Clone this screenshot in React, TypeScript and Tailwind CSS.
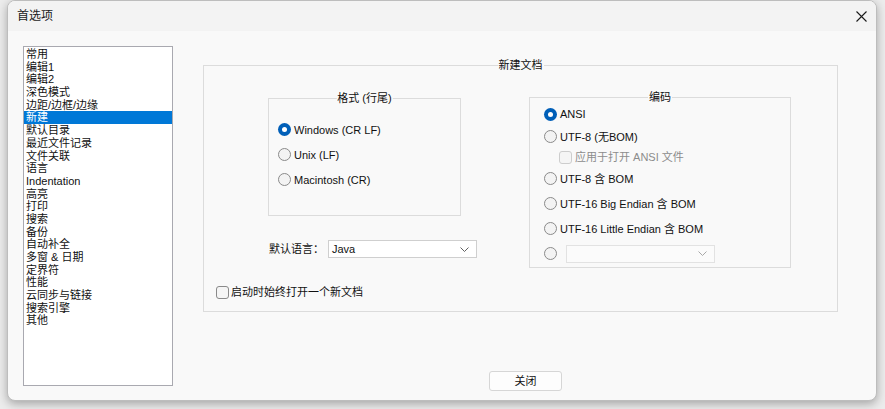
import React from "react";

const font = { fontFamily: '"Liberation Sans", "Noto Sans CJK SC", sans-serif' };

const items = [
  "常用", "编辑1", "编辑2", "深色模式", "边距/边框/边缘", "新建", "默认目录", "最近文件记录",
  "文件关联", "语言", "Indentation", "高亮", "打印", "搜索", "备份", "自动补全",
  "多窗 & 日期", "定界符", "性能", "云同步与链接", "搜索引擎", "其他",
];

function Radio({ checked }: { checked?: boolean }) {
  if (checked) {
    return (
      <span className="flex h-[13px] w-[13px] shrink-0 items-center justify-center rounded-full bg-[#005fb8]">
        <span className="h-[5px] w-[5px] rounded-full bg-white" />
      </span>
    );
  }
  return <span className="h-[13px] w-[13px] shrink-0 rounded-full border border-[#8a8a8a] bg-[#f3f3f3]" />;
}

function Chevron({ color = "#606060" }: { color?: string }) {
  return (
    <svg width="9" height="5" viewBox="0 0 9 5" fill="none">
      <path d="M0.5 0.5 L4.5 4.5 L8.5 0.5" stroke={color} strokeWidth="1" />
    </svg>
  );
}

function RadioRow({ checked, label, h }: { checked?: boolean; label: string; h: string }) {
  return (
    <div className={`flex items-center ${h}`}>
      <Radio checked={checked} />
      <span className="ml-[3px] text-[11px] leading-[14px] text-[#111]">{label}</span>
    </div>
  );
}

export default function App() {
  return (
    <div className="h-[409px] w-[885px] overflow-hidden bg-[#ececec] pl-[7px]" style={font}>
      <div className="flex h-[401px] w-[870px] flex-col overflow-hidden rounded-b-[8px] rounded-t-[8px] border border-[#bdbdbd] bg-[#f9f9f9] shadow-[0_3px_10px_rgba(0,0,0,0.3)]">
        {/* title bar */}
        <div className="flex h-[30px] shrink-0 items-center justify-between bg-[#f3f3f3] pl-[9px] pr-[9px]">
          <span className="text-[12px] leading-[14px] text-[#1b1b1b]">首选项</span>
          <svg width="11" height="11" viewBox="0 0 11 11">
            <path d="M0.5 0.5 L10.5 10.5 M10.5 0.5 L0.5 10.5" stroke="#1a1a1a" strokeWidth="1.1" />
          </svg>
        </div>
        {/* body */}
        <div className="flex flex-1 items-start pl-[15px] pt-[15px]">
          {/* list */}
          <div className="h-[340px] w-[150px] shrink-0 border border-[#a9a9b0] bg-white pt-[1px]">
            {items.map((it) => (
              <div
                key={it}
                className={`h-[12.7px] pl-[2px] text-[11px] leading-[12.7px] ${
                  it === "新建" ? "bg-[#0078d7] text-white" : "text-[#111]"
                }`}
              >
                {it}
              </div>
            ))}
          </div>
          {/* right side */}
          <div className="ml-[30px] flex flex-col pt-[19px]">
            <div className="relative h-[247px] w-[635px] border border-[#dcdcdc]">
              <span className="absolute left-1/2 top-[-8px] -translate-x-1/2 bg-[#f9f9f9] px-[1px] text-[11px] leading-[14px] text-[#111]">
                新建文档
              </span>
              <div className="flex items-start pl-[64px] pt-[31px]">
                {/* left column */}
                <div className="flex w-[193px] flex-col">
                  <div className="relative mt-[1px] h-[118px] w-[193px] border border-[#dcdcdc] pl-[9px] pt-[18px]">
                    <span className="absolute left-1/2 top-[-8px] -translate-x-1/2 bg-[#f9f9f9] px-[1px] text-[11px] leading-[14px] text-[#111]">
                      格式 (行尾)
                    </span>
                    <RadioRow checked label="Windows (CR LF)" h="h-[25px]" />
                    <RadioRow label="Unix (LF)" h="h-[25px]" />
                    <RadioRow label="Macintosh (CR)" h="h-[25px]" />
                  </div>
                  <div className="ml-[1px] mt-[24px] flex h-[18px] items-center">
                    <span className="w-[59px] shrink-0 text-[11px] leading-[14px] text-[#111]">默认语言：</span>
                    <div className="flex h-[18px] w-[149px] shrink-0 items-center justify-between border border-[#cfcfcf] bg-white pl-[3px] pr-[7px]">
                      <span className="text-[11px] leading-[14px] text-[#111]">Java</span>
                      <Chevron />
                    </div>
                  </div>
                </div>
                {/* encoding */}
                <div className="relative ml-[68px] h-[171px] w-[262px] border border-[#dcdcdc] pl-[14px] pt-[5px]">
                  <span className="absolute left-1/2 top-[-8px] -translate-x-1/2 bg-[#f9f9f9] px-[1px] text-[11px] leading-[14px] text-[#111]">
                    编码
                  </span>
                  <RadioRow checked label="ANSI" h="h-[22px]" />
                  <RadioRow label="UTF-8 (无BOM)" h="h-[23px]" />
                  <div className="flex h-[18px] items-center pl-[15px]">
                    <span className="h-[13px] w-[13px] shrink-0 rounded-[3px] border border-[#cdcdcd] bg-[#f5f5f5]" />
                    <span className="ml-[3px] text-[11px] leading-[14px] text-[#8c8c8c]">应用于打开 ANSI 文件</span>
                  </div>
                  <RadioRow label="UTF-8 含 BOM" h="h-[25px]" />
                  <RadioRow label="UTF-16 Big Endian 含 BOM" h="h-[25px]" />
                  <RadioRow label="UTF-16 Little Endian 含 BOM" h="h-[25px]" />
                  <div className="flex h-[25px] items-center">
                    <Radio />
                    <div className="ml-[9px] flex h-[18px] w-[149px] items-center justify-end border border-[#e2e2e2] bg-[#fbfbfb] pr-[7px]">
                      <Chevron color="#a8a8a8" />
                    </div>
                  </div>
                </div>
              </div>
              <div className="mt-[17px] flex items-center pl-[12px]">
                <span className="h-[13px] w-[13px] shrink-0 rounded-[3px] border border-[#8a8a8a] bg-[#f5f5f5]" />
                <span className="ml-[2px] text-[11px] leading-[14px] text-[#111]">启动时始终打开一个新文档</span>
              </div>
            </div>
            <div className="ml-[286px] mt-[59px] flex h-[20px] w-[73px] items-center justify-center rounded-[3px] border border-[#d6d6d6] bg-[#fdfdfd]">
              <span className="text-[11px] leading-[14px] text-[#111]">关闭</span>
            </div>
          </div>
        </div>
      </div>
    </div>
  );
}
